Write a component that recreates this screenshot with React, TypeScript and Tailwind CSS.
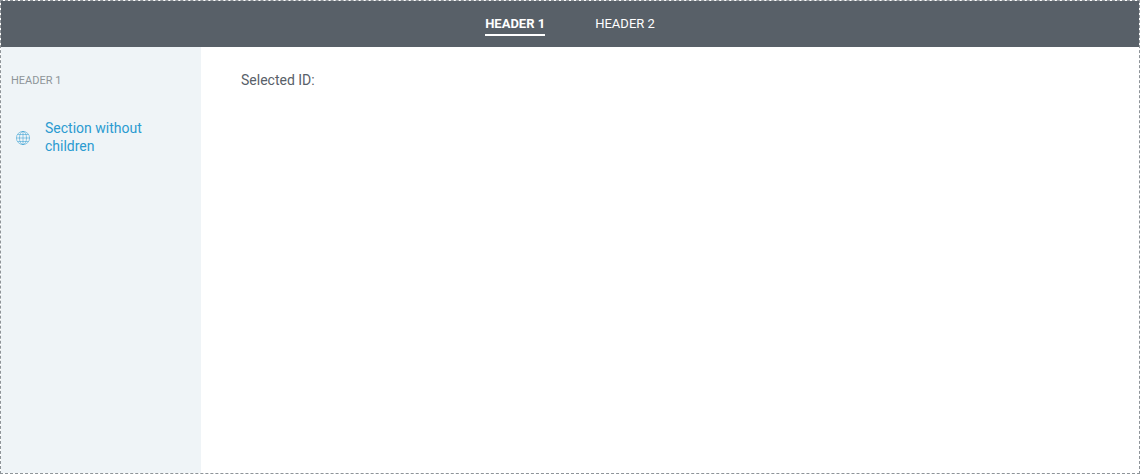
import { useState } from "react";

const headers = ["HEADER 1", "HEADER 2"];

function GlobeIcon() {
  return (
    <svg
      aria-hidden="true"
      viewBox="0 0 14 14"
      className="mt-0.5 size-3.5 shrink-0"
      fill="none"
      stroke="currentColor"
      strokeWidth="0.5"
    >
      <circle cx="7" cy="7" r="6.6" />
      <ellipse cx="7" cy="7" rx="3.5" ry="6.6" />
      <path d="M7 .4v13.2M.4 7h13.2M1.6 3.5h10.8M1.6 10.5h10.8" />
    </svg>
  );
}

export default function App() {
  const [active, setActive] = useState(0);
  const [selected, setSelected] = useState("");

  return (
    <div className="flex min-h-screen flex-col border border-dashed border-[#8e9499] bg-white font-['Roboto',sans-serif] text-sm text-[#586069]">
      <header className="bg-[#586068] text-white">
        <nav className="flex h-[46px] items-center justify-center gap-[50px]">
          {headers.map((label, i) => (
            <button
              key={label}
              type="button"
              onClick={() => setActive(i)}
              className={
                i === active
                  ? "border-y-2 border-t-transparent border-b-white text-[13px] leading-5 font-bold"
                  : "border-y-2 border-transparent text-[13px] leading-5"
              }
            >
              {label}
            </button>
          ))}
        </nav>
      </header>
      <div className="flex flex-1">
        <aside className="w-[200px] shrink-0 bg-[#eff4f7] px-2.5 pt-6">
          <h2 className="text-[11px] leading-5 text-[#8e9499]">{headers[active]}</h2>
          <a
            href="#section"
            onClick={() => setSelected("section")}
            className="mt-7 flex items-center gap-[15px] pr-10 pl-[5px] leading-[18px] text-[#2b9bd1]"
          >
            <GlobeIcon />
            Section without children
          </a>
        </aside>
        <main className="flex-1 px-10 pt-6">
          <p className="leading-[18px]">Selected ID: {selected}</p>
        </main>
      </div>
    </div>
  );
}
